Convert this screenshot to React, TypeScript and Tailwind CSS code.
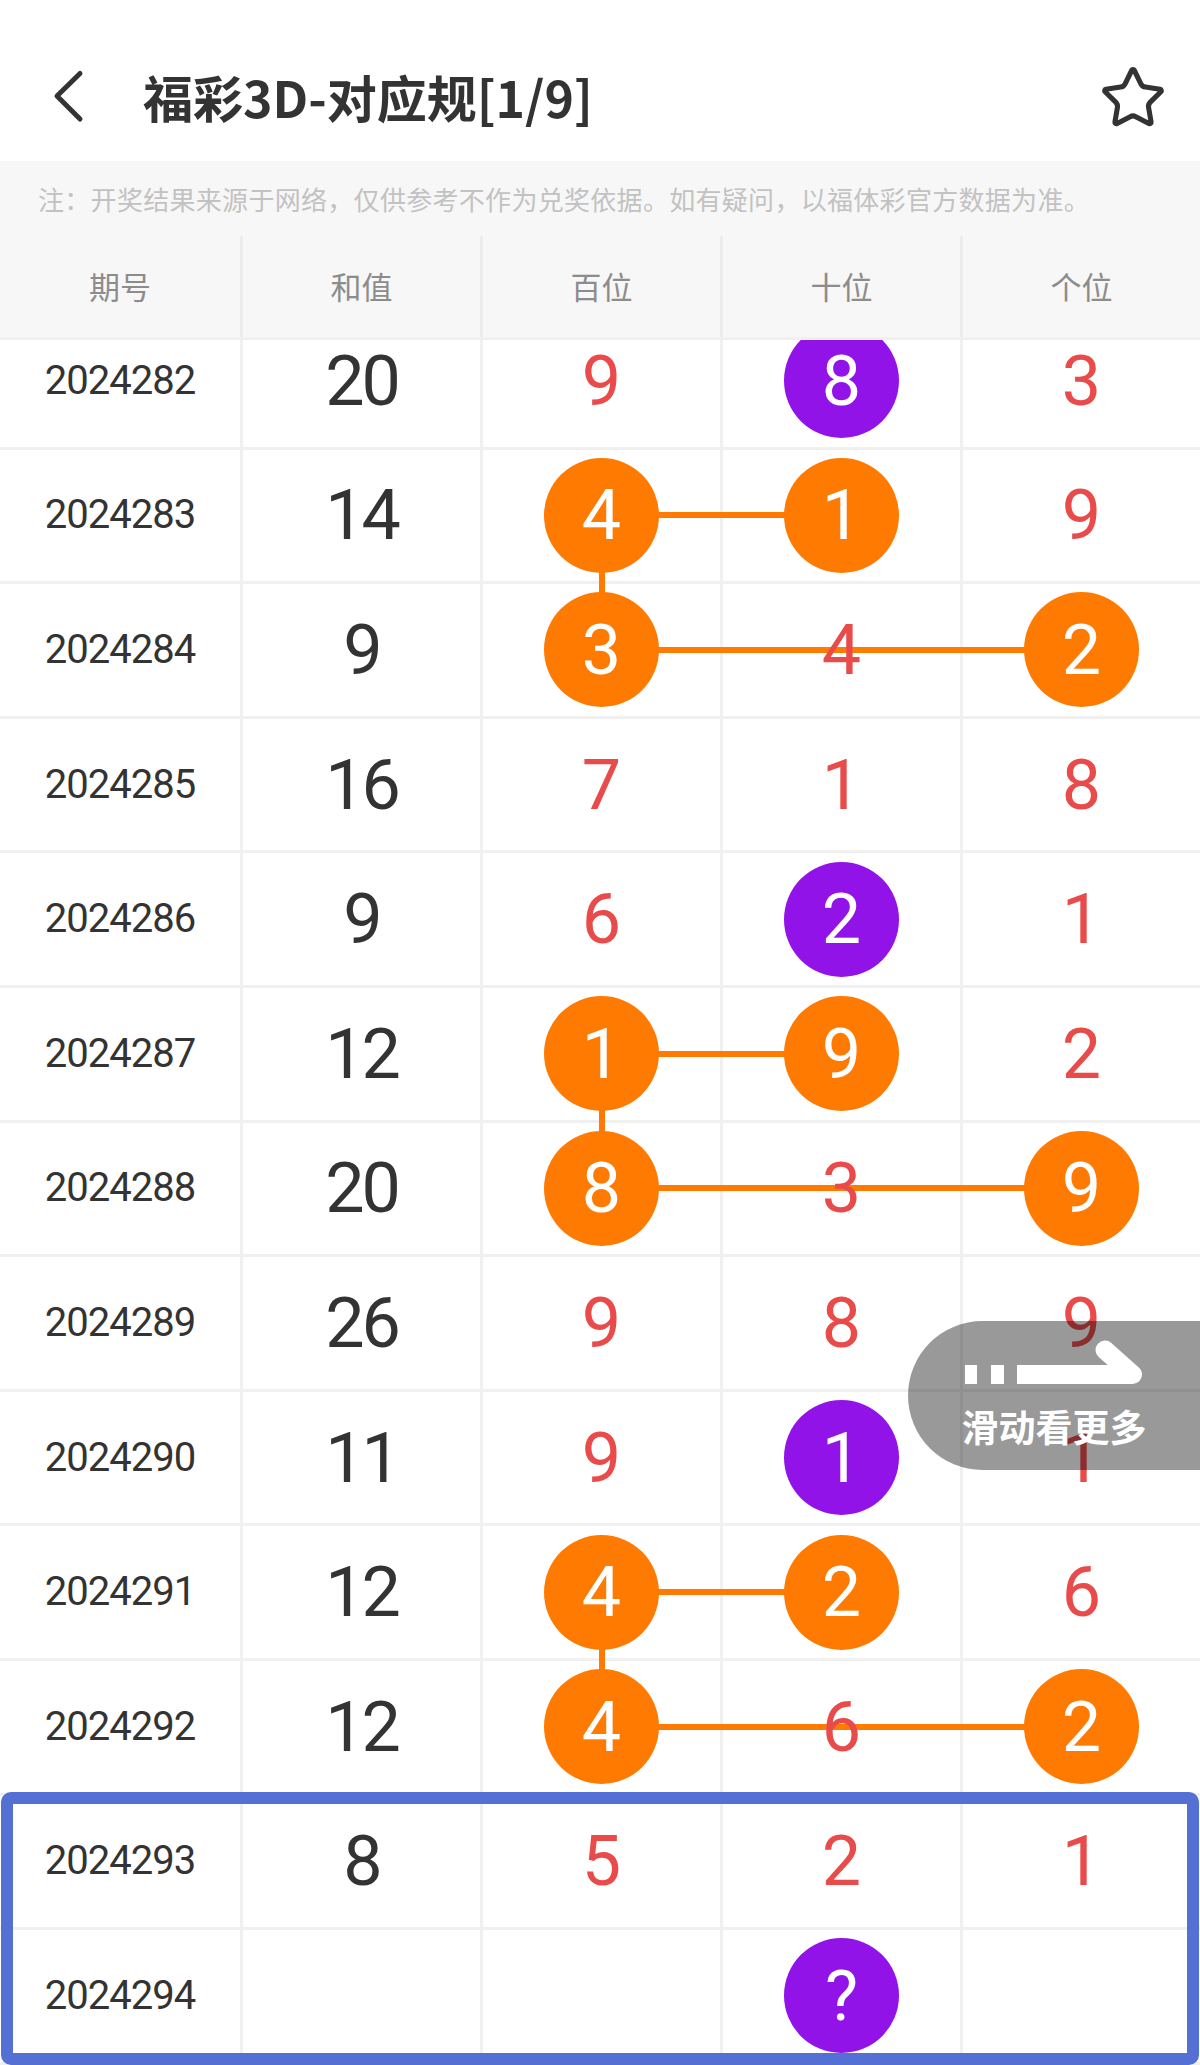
import { Star } from 'lucide-react';

type Cell = { v: string; kind?: 'o' | 'p' };
type Row = { id: string; sum: string; cells: Cell[]; link?: 'a' | 'b' };

const o = (v: string): Cell => ({ v, kind: 'o' });
const p = (v: string): Cell => ({ v, kind: 'p' });
const n = (v: string): Cell => ({ v });

const rows: Row[] = [
  { id: '2024282', sum: '20', cells: [n('9'), p('8'), n('3')] },
  { id: '2024283', sum: '14', cells: [o('4'), o('1'), n('9')], link: 'a' },
  { id: '2024284', sum: '9', cells: [o('3'), n('4'), o('2')], link: 'b' },
  { id: '2024285', sum: '16', cells: [n('7'), n('1'), n('8')] },
  { id: '2024286', sum: '9', cells: [n('6'), p('2'), n('1')] },
  { id: '2024287', sum: '12', cells: [o('1'), o('9'), n('2')], link: 'a' },
  { id: '2024288', sum: '20', cells: [o('8'), n('3'), o('9')], link: 'b' },
  { id: '2024289', sum: '26', cells: [n('9'), n('8'), n('9')] },
  { id: '2024290', sum: '11', cells: [n('9'), p('1'), n('1')] },
  { id: '2024291', sum: '12', cells: [o('4'), o('2'), n('6')], link: 'a' },
  { id: '2024292', sum: '12', cells: [o('4'), n('6'), o('2')], link: 'b' },
  { id: '2024293', sum: '8', cells: [n('5'), n('2'), n('1')] },
  { id: '2024294', sum: '', cells: [n(''), p('?'), n('')] },
];

const cjk = "font-[family-name:'Noto_Sans_CJK_SC',sans-serif]";
const num = "font-[family-name:Roboto,'Noto_Sans_CJK_SC',sans-serif]";

function TableRow({ row }: { row: Row }) {
  return (
    <div className={`relative grid h-[134.6px] grid-cols-5 border-b-[3px] border-[#f0f0f0] ${num}`}>
      {/* 连线画在格线之上、号码之下 */}
      {row.link === 'a' && (
        <>
          <div className="absolute left-[601px] top-1/2 h-[6px] w-[240px] -translate-y-1/2 bg-[#ff7a00]" />
          <div className="absolute left-[598.5px] top-1/2 h-[134.6px] w-[6px] bg-[#ff7a00]" />
        </>
      )}
      {row.link === 'b' && (
        <div className="absolute left-[601px] top-1/2 h-[6px] w-[480px] -translate-y-1/2 bg-[#ff7a00]" />
      )}
      <div className="flex items-center justify-center text-[40px] leading-none tracking-[-1px] text-[#333]">
        <span className="relative">{row.id}</span>
      </div>
      <div className="flex items-center justify-center border-l-[3px] border-[#f0f0f0] text-[70px] leading-none tracking-[-3px] text-[#333]">
        <span className="relative">{row.sum}</span>
      </div>
      {row.cells.map((c, i) => (
        <div key={i} className="flex items-center justify-center border-l-[3px] border-[#f0f0f0] text-[70px] leading-none">
          {c.kind ? (
            <div
              className={`relative flex h-[115px] w-[115px] items-center justify-center rounded-full text-white ${
                c.kind === 'o' ? 'bg-[#ff7a00]' : 'bg-[#9213e8]'
              }`}
            >
              {c.v}
            </div>
          ) : (
            <span className="relative text-[#e94b4b]">{c.v}</span>
          )}
        </div>
      ))}
    </div>
  );
}

export default function App() {
  return (
    <div className="relative h-[2065px] w-[1200px] overflow-hidden bg-white">
      {/* 顶部标题栏 */}
      <div className="flex h-[161px] items-center pt-[30px]">
        <svg className="ml-[45px] h-[60px] w-[40px]" viewBox="0 0 40 60" fill="none">
          <polyline
            points="35,7.5 12,30 35,53"
            stroke="#333"
            strokeWidth="5"
            strokeLinecap="round"
            strokeLinejoin="round"
          />
        </svg>
        <h1 className={`ml-[58px] text-[50px] font-bold leading-none text-[#333] ${cjk}`}>福彩3D-对应规[1/9]</h1>
        <Star className="ml-auto mr-[33px] mt-[4px]" size={68} strokeWidth={1.8} color="#333" />
      </div>

      {/* 提示 */}
      <div className={`flex h-[75px] items-center bg-[#f7f7f7] pl-[38px] text-[26px] tracking-[0.3px] text-[#c2c2c2] ${cjk}`}>
        注：开奖结果来源于网络，仅供参考不作为兑奖依据。如有疑问，以福体彩官方数据为准。
      </div>

      {/* 表头 */}
      <div className={`grid h-[104px] grid-cols-5 border-b-[3px] border-[#f0f0f0] bg-[#f7f7f7] text-[31px] text-[#8c8c8c] ${cjk}`}>
        <div className="flex items-center justify-center">期号</div>
        <div className="flex items-center justify-center border-l-[3px] border-[#ececec]">和值</div>
        <div className="flex items-center justify-center border-l-[3px] border-[#ececec]">百位</div>
        <div className="flex items-center justify-center border-l-[3px] border-[#ececec]">十位</div>
        <div className="flex items-center justify-center border-l-[3px] border-[#ececec]">个位</div>
      </div>

      {/* 表格内容 */}
      <div className="h-[1725px] overflow-hidden">
        <div className="-mt-[25px]">
          {rows.map((r) => (
            <TableRow key={r.id} row={r} />
          ))}
        </div>
      </div>

      {/* 最近两期高亮框 */}
      <div className="pointer-events-none absolute left-[1px] top-[1792px] h-[273px] w-[1198px] rounded-[10px] border-[12px] border-[#5470d4]" />

      {/* 滑动看更多 */}
      <div className="absolute left-[908px] top-[1321px] flex h-[149px] w-[292px] flex-col items-center rounded-l-full bg-black/40 pt-[16px]">
        <svg width="185" height="50" viewBox="0 0 185 50" fill="none">
          <rect x="3" y="28" width="12" height="19" fill="#fff" />
          <rect x="29" y="28" width="13" height="19" fill="#fff" />
          <rect x="55" y="28" width="60" height="19" fill="#fff" />
          <polyline
            points="100,37.5 170.5,37.5 143,13"
            stroke="#fff"
            strokeWidth="19"
            strokeLinecap="round"
            strokeLinejoin="round"
          />
        </svg>
        <div className={`mt-[21px] text-[37px] font-bold leading-none text-white ${cjk}`}>滑动看更多</div>
      </div>
    </div>
  );
}
